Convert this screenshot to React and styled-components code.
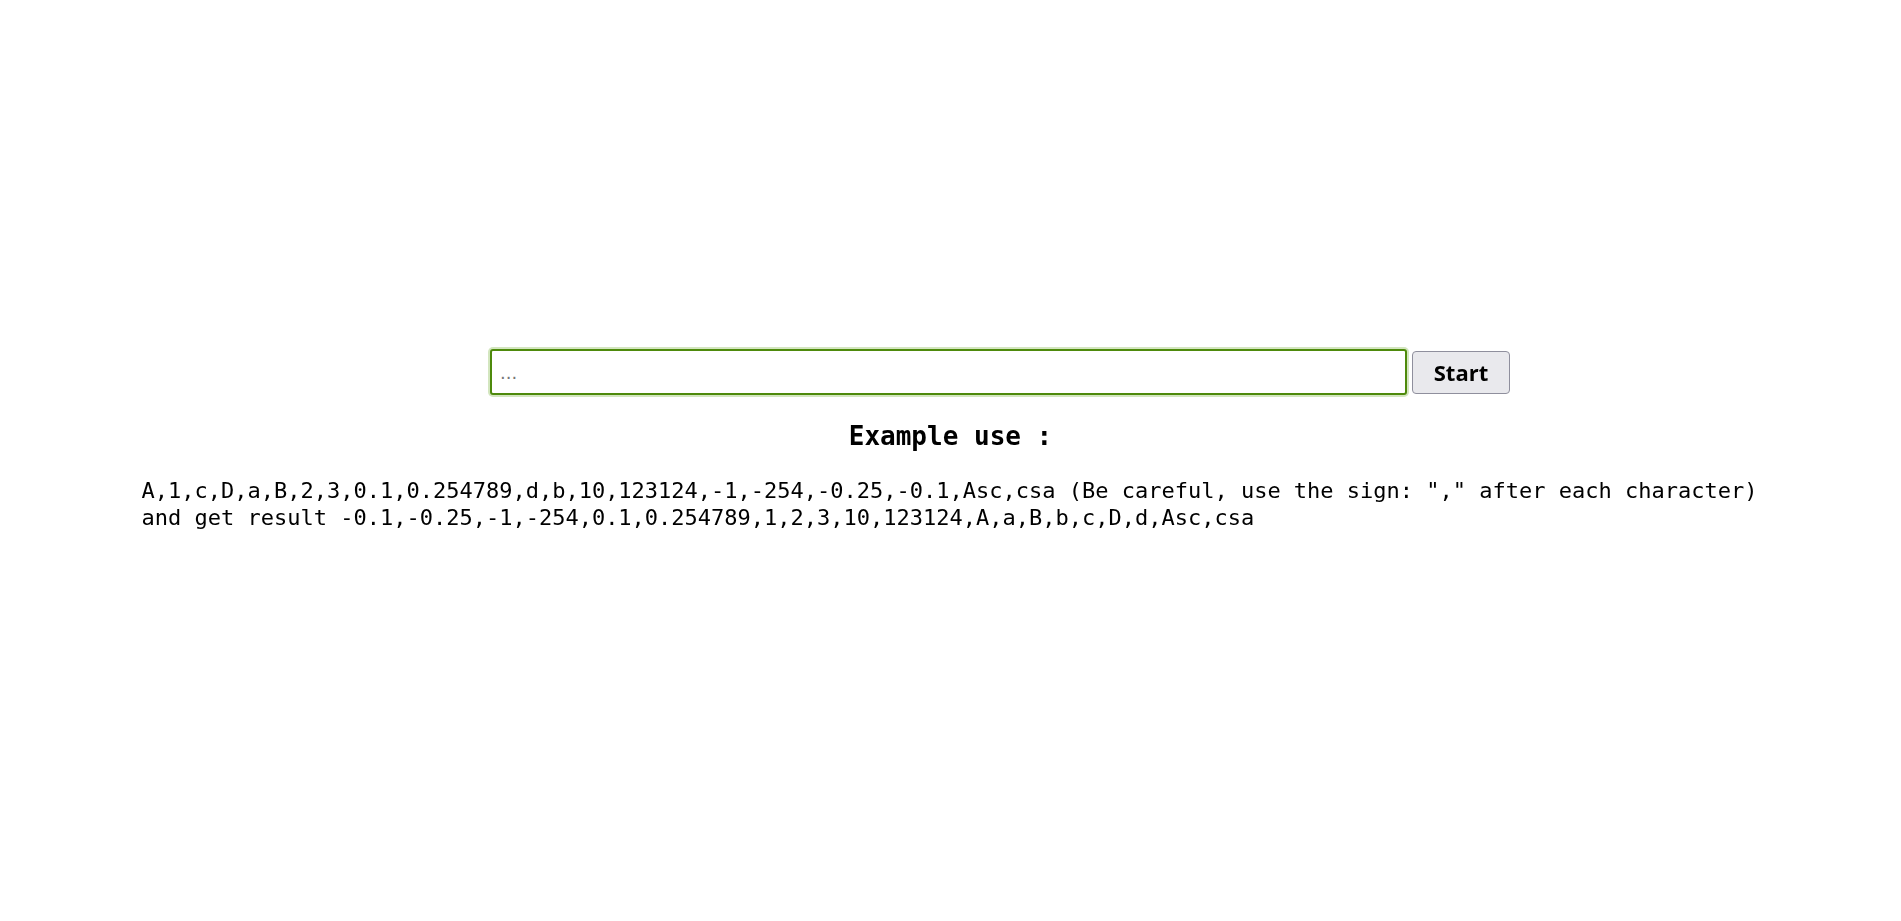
import React, { useState } from 'react';
import styled, { createGlobalStyle } from 'styled-components';

const GlobalStyle = createGlobalStyle`
  body {
    margin: 0;
    background: #fff;
    font-family: "DejaVu Sans Mono", "Liberation Mono", monospace;
    color: #000;
  }
`;

function App() {
    const [value, setValue] = useState('');

    return (
        <>
            <GlobalStyle />
            <Page>
                <Form onSubmit={e => e.preventDefault()}>
                    <Input
                        autoFocus
                        value={value}
                        placeholder="..."
                        onChange={e => setValue(e.target.value)}
                    />
                    <StartButton type="submit">Start</StartButton>
                </Form>
                <Title>Example use :</Title>
                <Example>
                    <Line>A,1,c,D,a,B,2,3,0.1,0.254789,d,b,10,123124,-1,-254,-0.25,-0.1,Asc,csa (Be careful, use the sign: "," after each character)</Line>
                    <Line>and get result -0.1,-0.25,-1,-254,0.1,0.254789,1,2,3,10,123124,A,a,B,b,c,D,d,Asc,csa</Line>
                </Example>
            </Page>
        </>
    );
}

export default App;

const Page = styled.div`
  display: flex;
  flex-direction: column;
  align-items: center;
  padding-top: 349px;
  min-height: 100vh;
  box-sizing: border-box;
`;

const Form = styled.form`
  width: 100%;
  display: grid;
  grid-template-columns: 1fr 917px 1fr;
  align-items: center;
  padding-right: 4px;
  box-sizing: border-box;
`;

const Input = styled.input`
  grid-column: 2;
  height: 46px;
  box-sizing: border-box;
  padding: 0 8px;
  border: 2px solid #4e8a0c;
  border-radius: 3px;
  outline: none;
  box-shadow: 0 0 0 2px #d3e6bf;
  font-family: "DejaVu Sans", sans-serif;
  font-size: 18px;
  &::placeholder {
    color: #767676;
  }
`;

const StartButton = styled.button`
  grid-column: 3;
  justify-self: start;
  margin-left: 5px;
  width: 98px;
  height: 43px;
  padding: 0;
  background: #e9e9ed;
  border: 1px solid #8f8f9d;
  border-radius: 4px;
  font-family: "Open Sans", sans-serif;
  font-weight: 700;
  font-size: 22px;
  color: #000;
  cursor: pointer;
`;

const Title = styled.h2`
  margin: 26px 0 0;
  font-size: 26px;
  font-weight: bold;
  line-height: normal;
`;

const Example = styled.div`
  margin-top: 26px;
  padding-right: 2px;
  font-size: 22px;
  line-height: 27px;
`;

const Line = styled.p`
  margin: 0;
  white-space: nowrap;
`;
